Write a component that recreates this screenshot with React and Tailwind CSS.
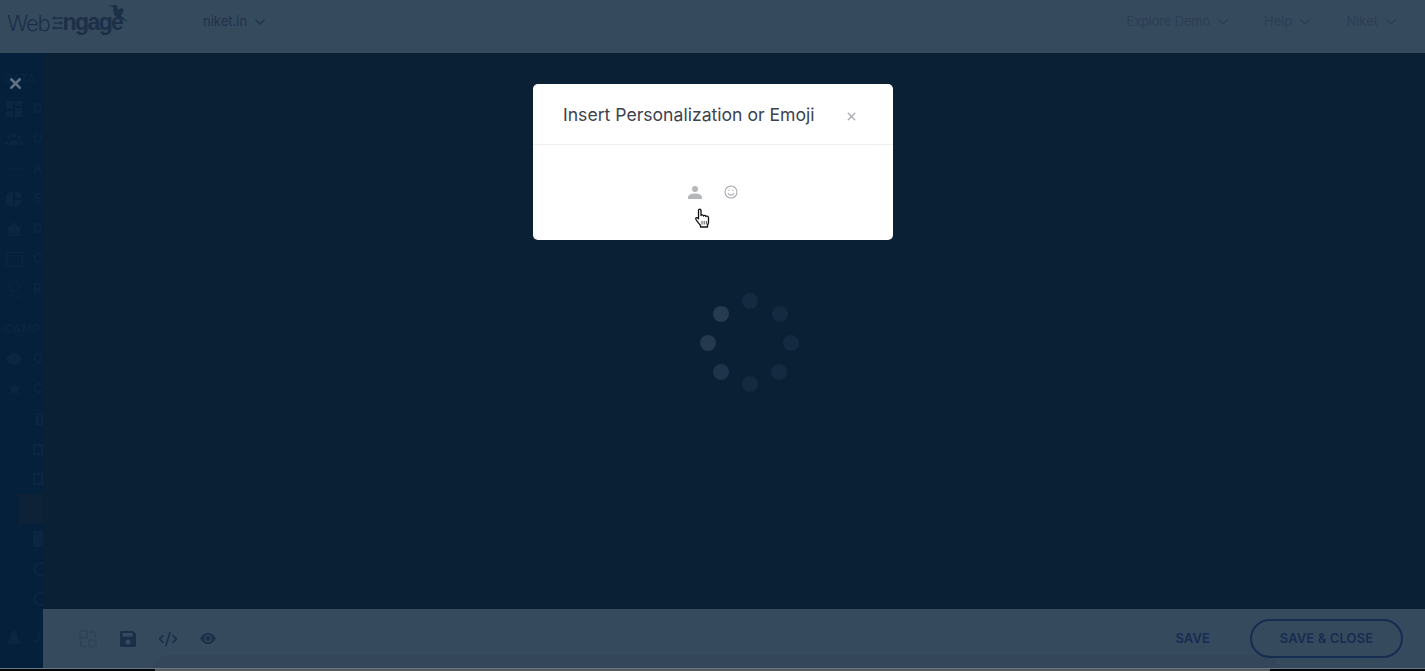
import React from 'react';
import { X, CodeXml } from 'lucide-react';

const dim = '#0a2640';

const dataRows = [
  { label: 'D', icon: 'grid' },
  { label: 'U', icon: 'users' },
  { label: 'A', icon: 'line' },
  { label: 'S', icon: 'pie' },
  { label: 'D', icon: 'home' },
  { label: 'C', icon: 'card' },
  { label: 'R', icon: 'pin' },
];

function Chevron() {
  return (
    <svg width="10" height="6" viewBox="0 0 10 6" fill="none" stroke="currentColor" strokeWidth="1.3">
      <path d="M.6.8L5 5 9.400.8" />
    </svg>
  );
}

function NavItem({ label, className = '' }) {
  return (
    <div className={`flex items-center gap-[8px] text-[13px] text-[#2b3e54] ${className}`}>
      <span>{label}</span>
      <Chevron />
    </div>
  );
}

function SideIcon({ kind }) {
  if (kind === 'grid') {
    return (
      <svg width="16" height="16" viewBox="0 0 16 16" fill={dim}>
        <rect x="0" y="0" width="7" height="8" />
        <rect x="9" y="0" width="7" height="5" />
        <rect x="0" y="10" width="7" height="6" />
        <rect x="9" y="7" width="7" height="9" />
      </svg>
    );
  }
  if (kind === 'users') {
    return (
      <svg width="20" height="14" viewBox="0 0 20 14" fill={dim}>
        <circle cx="10" cy="3" r="3" />
        <circle cx="4" cy="5" r="2" />
        <circle cx="16" cy="5" r="2" />
        <path d="M4 14c0-4 3-6 6-6s6 2 6 6zM0 14c0-3 1-5 3-5l1 1-2 4zM20 14c0-3-1-5-3-5l-1 1 2 4z" />
      </svg>
    );
  }
  if (kind === 'line') {
    return (
      <svg width="16" height="6" viewBox="0 0 16 6" fill="none" stroke={dim} strokeWidth="1">
        <path d="M0 3h16" />
      </svg>
    );
  }
  if (kind === 'pie') {
    return (
      <svg width="16" height="16" viewBox="0 0 16 16" fill={dim}>
        <path d="M7 0v16A8 8 0 0 1 7 0zM9 0a8 8 0 0 1 7 7H9zM9 9h7a8 8 0 0 1-7 7z" />
      </svg>
    );
  }
  if (kind === 'home') {
    return (
      <svg width="16" height="14" viewBox="0 0 16 14" fill={dim}>
        <path d="M8 0l8 7h-2v4H2V7H0zM1 12h14v2H1z" />
      </svg>
    );
  }
  if (kind === 'card') {
    return (
      <svg width="17" height="15" viewBox="0 0 17 15" fill="none" stroke={dim} strokeWidth="1.2">
        <rect x="0.6" y="0.6" width="15.8" height="13.8" />
        <path d="M1 4h15" />
      </svg>
    );
  }
  if (kind === 'eye') {
    return (
      <svg width="16" height="12" viewBox="0 0 16 12" fill={dim}>
        <path d="M0 6c2-4 5-6 8-6s6 2 8 6c-2 4-5 6-8 6s-6-2-8-6z" />
      </svg>
    );
  }
  if (kind === 'star') {
    return (
      <svg width="14" height="14" viewBox="0 0 14 14" fill={dim}>
        <path d="M7 0l2 5h5l-4 3 2 6-5-4-5 4 2-6-4-3h5z" />
      </svg>
    );
  }
  if (kind === 'rocket') {
    return (
      <svg width="12" height="16" viewBox="0 0 12 16" fill={dim}>
        <path d="M6 0c3 2 4 5 4 9l2 3v2H0v-2l2-3c0-4 1-7 4-9z" />
      </svg>
    );
  }
  return (
    <svg width="16" height="18" viewBox="0 0 16 18" fill="none" stroke={dim} strokeWidth="1.2">
      <circle cx="8" cy="6" r="5" />
      <path d="M2 16c2-2 4-2 6 0s4 0 6 0" />
    </svg>
  );
}

function SideRow({ icon, children }) {
  return (
    <div className="h-[30px] flex items-center">
      <span className="w-[33px] pl-[5px] pr-[10px] flex justify-center shrink-0">{icon && <SideIcon kind={icon} />}</span>
      {children}
    </div>
  );
}

function Logo() {
  return (
    <div className="relative flex items-center text-[#1b2f47] leading-none mt-[1px]">
      <span className="text-[22px] font-light tracking-[-1.2px] font-['Inter',sans-serif]">Web</span>
      <svg className="ml-[2px]" width="11" height="16" viewBox="0 0 12 16" fill="#1b2f47">
        <path d="M0 2.500L3 0v1.700h9v1.600H3V5zM12 8L9 5.500v1.700H2v1.600h7v1.700zM0 13.500L3 11v1.700h9v1.600H3V16z" />
      </svg>
      <span className="text-[23px] font-bold tracking-[-1.6px] font-['Liberation_Sans',sans-serif]">ngage</span>
      <svg className="absolute left-[100px] -top-[7px]" width="21" height="20" viewBox="0 0 21 20" fill="#1b2f47">
        <path d="M0 1l6 .5c2-1.500 4-.5 4.500 2l.5 3c1-2 4-3 5-1.500s0 4.500-2.500 6.500l7 5.500-1 .5-7.500-4.500c-3 .5-5.500-2-5.500-5L6 3z" />
      </svg>
    </div>
  );
}

function Spinner() {
  return (
    <svg width="100" height="100" viewBox="0 0 100 100">
      <circle cx="50" cy="9" r="8" fill="#132a40" />
      <circle cx="80" cy="22" r="8" fill="#132a40" />
      <circle cx="91" cy="51" r="8" fill="#132a40" />
      <circle cx="79" cy="80" r="8" fill="#132a40" />
      <circle cx="50" cy="92" r="8" fill="#132a40" />
      <circle cx="21" cy="80" r="8" fill="#1f344a" />
      <circle cx="8" cy="51" r="8" fill="#24384e" />
      <circle cx="21" cy="22" r="8" fill="#263a50" />
    </svg>
  );
}

function HandCursor() {
  return (
    <svg width="15" height="20" viewBox="0 0 15 20">
      <path
        d="M3.500 2.200C3.500.8 6 .8 6 2.200V7.500C6.300 6.600 8.300 6.600 8.500 8C8.800 7.100 10.700 7.100 11 8.500C11.300 7.800 13.300 7.900 13.500 9.500V14C13.500 15.500 13 16 12.500 17.500V19H5.500V17.500C4 15.500 2.500 14 1 11.500C.2 10 1.800 9 2.800 10L3.500 10.800Z"
        fill="#fff"
        stroke="#111"
        strokeWidth="1.300"
        strokeLinejoin="round"
      />
      <path d="M7 13v3.500M9.200 13v3.500M11.400 13v3.500" stroke="#444" strokeWidth="0.900" />
    </svg>
  );
}

export default function App() {
  return (
    <div className="relative h-[671px] w-[1425px] overflow-hidden flex flex-col bg-[#0a2135] font-['Inter',sans-serif]">
      {/* Top bar */}
      <header className="h-[53px] shrink-0 bg-[#364a5e] flex items-center pl-[7px] pr-[29px] pb-[9px]">
        <div className="w-[196px]">
          <Logo />
        </div>
        <NavItem label="niket.in" className="!text-[#1f3248]" />
        <div className="ml-auto flex items-center gap-[36px]">
          <NavItem label="Explore Demo" className="tracking-[-0.2px]" />
          <NavItem label="Help" />
          <NavItem label="Niket" />
        </div>
      </header>

      <div className="flex-1 flex min-h-0">
        {/* Sidebar, nearly hidden under the overlay */}
        <aside className="w-[43px] shrink-0 bg-[#04203a] overflow-hidden pt-[11px] text-[#0a2640] text-[13px] font-semibold">
          <div className="h-[30px] flex items-center pl-[4px] text-[12px]">DATA</div>
          {dataRows.map((row, i) => (
            <SideRow key={i} icon={row.icon}>{row.label}</SideRow>
          ))}
          <div className="h-[30px] mt-[10px] flex items-center pl-[4px] text-[12px]">CAMP</div>
          <SideRow icon="eye">O</SideRow>
          <SideRow icon="star">C</SideRow>
          <SideRow><span className="block w-[8px] h-[12px] ml-[3px] border-2 border-[#0a2640]" /></SideRow>
          <SideRow><span className="block w-[10px] h-[11px] border-2 border-[#0a2640]" /></SideRow>
          <SideRow><span className="block w-[10px] h-[12px] border-2 border-[#0a2640]" /></SideRow>
          <div className="h-[30px] ml-[18px] bg-[#0d2137]" />
          <SideRow><span className="block w-[10px] h-[16px] bg-[#0a2640]" /></SideRow>
          <SideRow><span className="block w-[12px] h-[14px] rounded-l-full border-2 border-r-0 border-[#0a2640]" /></SideRow>
          <SideRow><span className="block w-[12px] h-[14px] rounded-l-full border-2 border-r-0 border-[#0a2640]" /></SideRow>
          <div className="mt-[9px]">
            <SideRow icon="rocket">J</SideRow>
          </div>
        </aside>

        <main className="flex-1 min-w-0 flex flex-col">
          <div className="flex-1 flex justify-center pl-[32px] pt-[239px]">
            <div>
              <Spinner />
            </div>
          </div>
          {/* Editor footer */}
          <footer className="relative h-[59px] shrink-0 bg-[#364a5e] flex items-center pl-[25px] pr-[22px]">
            <div className="absolute left-[107px] bottom-0 w-[1130px] h-[13px] bg-[#34465a] [clip-path:polygon(0_100%,14px_0,calc(100%-8px)_0,100%_100%)]" />
            <div className="relative flex items-center text-[#1b2f47]">
              <span className="w-[40px] flex justify-center">
                <svg width="18" height="18" viewBox="0 0 18 18" fill="none" stroke="#2a3d55" strokeWidth="1">
                  <rect x="1" y="1" width="7" height="7" />
                  <rect x="10" y="10" width="7" height="7" strokeDasharray="1.500 1" />
                  <path d="M11 2h3c1.500 0 2.500 1 2.500 2.500V7M15 5.500l1.500 1.500 1.500-1.500M7 16.500H4c-1.500 0-2.500-1-2.500-2.500v-3M0 12.500L1.500 11 3 12.500" />
                </svg>
              </span>
              <span className="w-[40px] flex justify-center">
                <svg width="16" height="16" viewBox="0 0 16 16" fill="#1b2f47">
                  <path d="M1.500 0H13l3 3v11.500a1.500 1.500 0 0 1-1.500 1.500h-13A1.500 1.500 0 0 1 0 14.500v-13A1.500 1.500 0 0 1 1.500 0z" />
                  <rect x="2.500" y="2" width="10" height="3.500" fill="#364a5e" />
                  <circle cx="8" cy="11" r="2.500" fill="#364a5e" />
                </svg>
              </span>
              <span className="w-[40px] flex justify-center">
                <CodeXml className="w-[20px] h-[20px]" strokeWidth={2} />
              </span>
              <span className="w-[40px] flex justify-center">
                <svg width="16" height="11" viewBox="0 0 16 11">
                  <path d="M0 5.500C2 2 5 0 8 0s6 2 8 5.500C14 9 11 11 8 11S2 9 0 5.500z" fill="#1b2f47" />
                  <circle cx="8" cy="5.500" r="3.600" fill="#364a5e" />
                  <circle cx="8" cy="5.500" r="2.400" fill="#1b2f47" />
                </svg>
              </span>
            </div>
            <div className="relative ml-auto flex items-center gap-[40px] text-[13px] font-semibold tracking-[0.1px] text-[#162c50]">
              <span>SAVE</span>
              <span className="w-[153px] h-[39px] rounded-full border-2 border-[#162c50] flex items-center justify-center">
                SAVE &amp; CLOSE
              </span>
            </div>
          </footer>
        </main>
      </div>
      {/* Capture strip at the very bottom */}
      <div className="h-[3px] shrink-0 border-t border-[#6a7784] flex">
        <div className="w-[155px] bg-[#050505]" />
        <div className="flex-1 bg-[#585858]" />
        <div className="w-[155px] bg-[#050505]" />
      </div>

      {/* Close the overlay */}
      <X className="absolute left-[7px] top-[75px] w-[17px] h-[17px] text-[#5f7183]" strokeWidth={3.500} />

      {/* Modal */}
      <div className="absolute left-[533px] top-[84px] w-[360px] h-[156px] bg-white rounded-[5px] flex flex-col">
        <div className="h-[61px] shrink-0 border-b border-[#eeeff1] flex items-center pl-[30px] pr-[35px] justify-between">
          <h2 className="text-[17.6px] font-normal text-[#3c4250] mt-[2px]">Insert Personalization or Emoji</h2>
          <X className="w-[13px] h-[13px] text-[#a8abb1] mt-[4px]" strokeWidth={2.500} />
        </div>
        <div className="flex-1 relative flex items-start justify-center pt-[41px] gap-[22px]">
          <svg width="14" height="13" viewBox="0 0 14 13" fill="#b5b7bb">
            <circle cx="7" cy="3" r="3" />
            <path d="M0 13v-1.500C0 9 3 7.500 7 7.500s7 1.500 7 4V13z" />
          </svg>
          <svg className="-mt-[1px]" width="14" height="14" viewBox="0 0 14 14" fill="none" stroke="#a9abb0" strokeWidth="1.100">
            <circle cx="7" cy="7" r="6" />
            <path d="M4 8.200c.7 1.300 1.800 1.900 3 1.900s2.300-.6 3-1.900" />
            <circle cx="5" cy="5.300" r=".7" fill="#a9abb0" stroke="none" />
            <circle cx="9" cy="5.300" r=".7" fill="#a9abb0" stroke="none" />
          </svg>
          <span className="absolute left-[162px] top-[63px]">
            <HandCursor />
          </span>
        </div>
      </div>
    </div>
  );
}
